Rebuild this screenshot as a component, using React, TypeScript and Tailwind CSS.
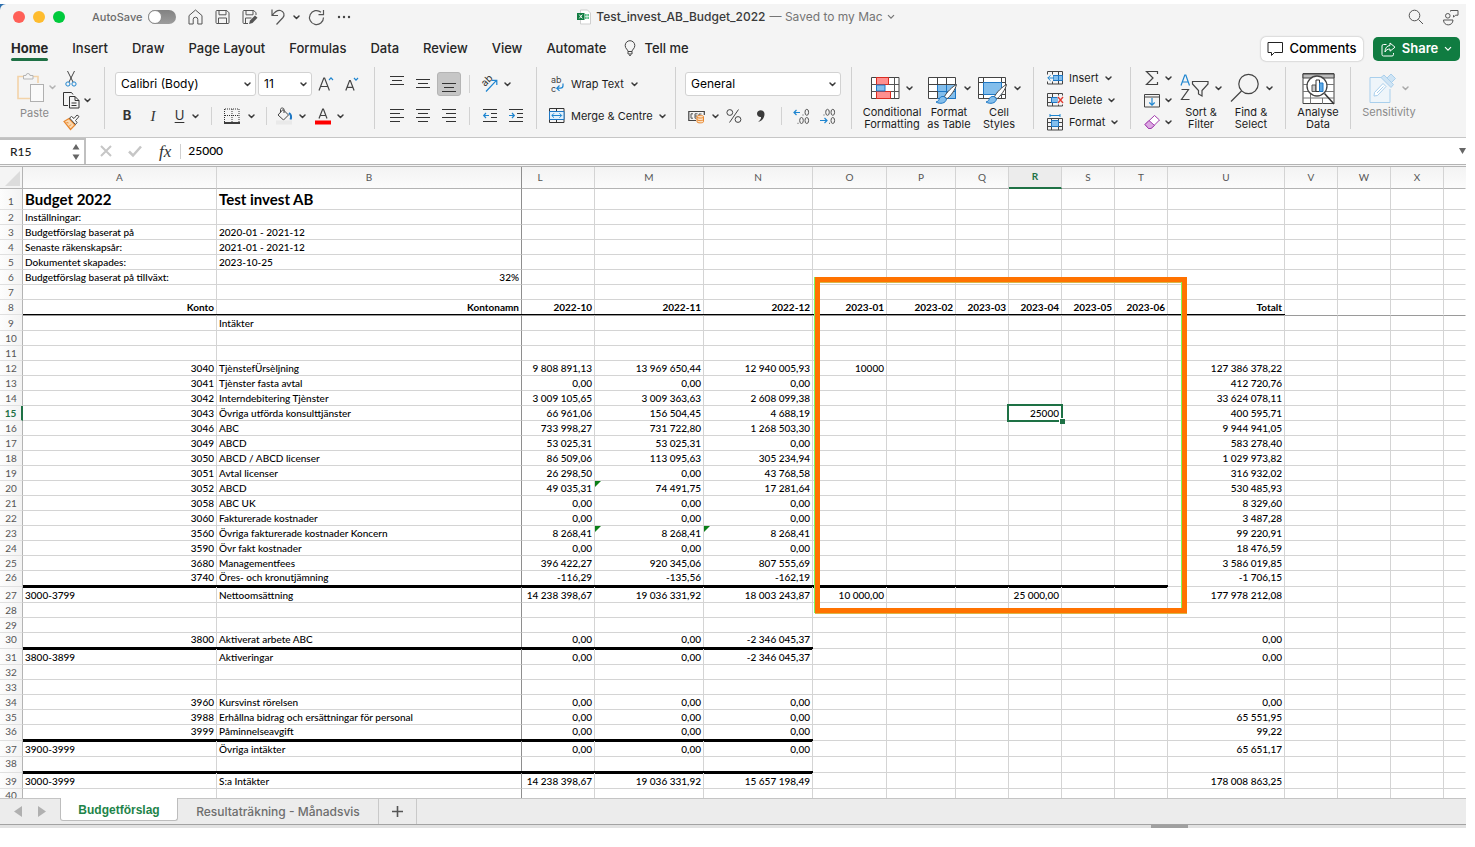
import type { ReactNode } from "react";

/* ---------- small building blocks ---------- */

type SvgProps = { w: number; h: number; children: ReactNode; className?: string };

function Svg({ w, h, children, className = "" }: SvgProps) {
  return (
    <svg
      width={w}
      height={h}
      viewBox={`0 0 ${w} ${h}`}
      fill="none"
      stroke="#3b3b3b"
      strokeWidth="1"
      className={`shrink-0 overflow-visible ${className}`}
      aria-hidden="true"
    >
      {children}
    </svg>
  );
}

function Chevron({ className = "" }: { className?: string }) {
  return (
    <Svg w={7} h={5} className={className}>
      <path d="M1 1l2.5 2.5L6 1" strokeWidth="1.5" strokeLinecap="round" strokeLinejoin="round" />
    </Svg>
  );
}

function IconButton({ label, children, className = "w-6" }: { label: string; children: ReactNode; className?: string }) {
  return (
    <button type="button" aria-label={label} className={`flex h-6 shrink-0 items-center justify-center rounded-[3px] ${className}`}>
      {children}
    </button>
  );
}

function Divider() {
  return <div className="h-[18px] w-px shrink-0 bg-[#d2d2d2]" />;
}

function Group({ width, children }: { width: string; children: ReactNode }) {
  return (
    <div className={`flex shrink-0 ${width}`}>
      <div className="min-w-0 grow">{children}</div>
      <div className="mt-0.5 h-[62px] w-px bg-[#d0d0d0]" />
    </div>
  );
}

function BigButton({ icon, lines, width, chevron = true, faded = false }: { icon: ReactNode; lines: string[]; width: string; chevron?: boolean; faded?: boolean }) {
  return (
    <button type="button" className={`flex shrink-0 flex-col items-center ${width} ${faded ? "text-[#8a8a8a]" : "text-[#1c1c1c]"}`}>
      <span className="flex h-[34px] items-center gap-[6px]">
        {icon}
        {chevron && <Chevron className={faded ? "opacity-40" : ""} />}
      </span>
      <span className="mt-px flex flex-col text-[11px] leading-3 whitespace-nowrap">
        {lines.map((l) => (
          <span key={l}>{l}</span>
        ))}
      </span>
    </button>
  );
}

/* ---------- title bar ---------- */

function TitleBar() {
  return (
    <div className="grid h-[26px] grid-cols-[1fr_auto_1fr] items-center">
      <div className="flex items-center pl-[13px]">
        <div className="flex gap-2">
          <button type="button" aria-label="Close" className="size-3 rounded-full bg-[#ff5f57]" />
          <button type="button" aria-label="Minimise" className="size-3 rounded-full bg-[#febc2e]" />
          <button type="button" aria-label="Zoom" className="size-3 rounded-full bg-[#00ca3c]" />
        </div>
        <label htmlFor="autosave" className="ml-[27px] w-[50px] text-[11px] font-medium whitespace-nowrap text-[#6b6b6b]">
          AutoSave
        </label>
        <span className="ml-1.5 flex h-[14px] w-7 items-center rounded-full bg-linear-to-b from-[#828282] to-[#9c9c9c]">
          <input
            id="autosave"
            type="checkbox"
            role="switch"
            className="size-[14px] appearance-none rounded-full border border-[#8a8a8a] bg-white"
          />
        </span>
        <div className="ml-3 flex items-center gap-3">
          <button type="button" aria-label="Home">
            <Svg w={15} h={16}>
              <path d="M1 6.6L7.5 1 14 6.6V15H9.8V10.5a2.3 2.3 0 00-4.6 0V15H1z" stroke="#555" strokeLinejoin="round" />
            </Svg>
          </button>
          <button type="button" aria-label="Save">
            <Svg w={15} h={16}>
              <path d="M1 2.5A1 1 0 012 1.5h9.8L14 3.8V13.5a1 1 0 01-1 1H2a1 1 0 01-1-1zM4 1.5v4.3h7V1.5M3.5 14.5V9h8v5.500" stroke="#555" />
            </Svg>
          </button>
          <button type="button" aria-label="Save as">
            <Svg w={16} h={16}>
              <path d="M6 14.500H2a1 1 0 01-1-1v-11A1 1 0 012 1.500h9.800L14 3.800V6M4 1.500v4.300h7V1.500M3.500 14.500V9h6" stroke="#555" />
              <path d="M7 15l1-3.500L13 6.500l2.500 2.300-5 5.200z" fill="#555" stroke="none" />
            </Svg>
          </button>
          <button type="button" aria-label="Undo" className="flex items-center gap-2">
            <Svg w={15} h={18}>
              <path d="M2 1.500v6h6M2.300 7.300C5 3.500 8 2 10.500 2.500c3.500.8 4.500 4.700 2.500 7L6.500 16.500" stroke="#555" strokeWidth="1.200" />
            </Svg>
            <Chevron />
          </button>
          <button type="button" aria-label="Redo" className="-ml-1">
            <Svg w={17} h={17}>
              <path d="M15.500 8.500A7 7 0 1113 3.200M15.500 1v4.700h-5" stroke="#555" strokeWidth="1.200" />
            </Svg>
          </button>
          <button type="button" aria-label="More">
            <Svg w={14} h={4}>
              <g fill="#444" stroke="none">
                <circle cx="2" cy="2" r="1.200" />
                <circle cx="7" cy="2" r="1.200" />
                <circle cx="12" cy="2" r="1.200" />
              </g>
            </Svg>
          </button>
        </div>
      </div>

      <h1 className="flex items-center pl-1.5 text-[12px] whitespace-nowrap text-[#3a3a3a]">
        <Svg w={15} h={16} className="mr-1">
          <path d="M3.500 1h7L13.500 4v11h-10z" fill="#fff" stroke="#cfcfcf" />
          <path d="M8 5h4v5H8z" fill="#5fbf8a" stroke="none" />
          <path d="M8 7.500h4M10 5v5" stroke="#fff" strokeWidth=".6" />
          <rect x="0" y="4" width="7.500" height="7" fill="#107c41" stroke="none" />
          <path d="M2.300 5.600l3 3.800M5.300 5.600l-3 3.800" stroke="#fff" />
        </Svg>
        <span className="font-medium">Test_invest_AB_Budget_2022</span>
        <span className="ml-1 text-[#757575]">— Saved to my Mac</span>
        <Svg w={8} h={6} className="ml-1">
          <path d="M1 1.200l3 3 3-3" stroke="#757575" strokeWidth="1.200" />
        </Svg>
      </h1>

      <div className="flex items-center justify-end gap-[18px] pr-[7px]">
        <button type="button" aria-label="Search">
          <Svg w={16} h={16}>
            <circle cx="6.500" cy="6.500" r="5.300" stroke="#555" />
            <path d="M10.500 10.500L15 15" stroke="#555" />
          </Svg>
        </button>
        <button type="button" aria-label="Account">
          <Svg w={17} h={17}>
            <circle cx="5.800" cy="6.800" r="2.300" stroke="#555" />
            <path d="M1.500 11h9.500c0 6.500-9.500 6.500-9.500 0z" stroke="#555" />
            <path d="M8.500 2.500v-1h7.500v4.700h-2.500l-2 2V6.200" stroke="#555" />
          </Svg>
        </button>
      </div>
    </div>
  );
}

/* ---------- ribbon tabs ---------- */

const TABS = ["Insert", "Draw", "Page Layout", "Formulas", "Data", "Review", "View", "Automate"];

function RibbonTabs() {
  return (
    <div className="flex h-[35px] items-start pl-[11px] text-[13px] text-[#262626]">
      <nav className="mt-2 flex gap-6 font-medium" aria-label="Ribbon">
        <a href="#home" className="flex h-[23px] flex-col justify-between leading-5 font-bold">
          Home
          <span className="h-[3px] rounded-full bg-[#1e7145]" />
        </a>
        {TABS.map((t) => (
          <a key={t} href={`#${t.toLowerCase().replace(" ", "-")}`} className="leading-5 whitespace-nowrap">
            {t}
          </a>
        ))}
      </nav>
      <button type="button" className="mt-2 ml-[18px] flex items-center gap-2 leading-5 font-medium">
        <Svg w={12} h={16}>
          <path d="M4 11.500c0-2-2.800-2.700-2.800-6a4.800 4.800 0 019.600 0c0 3.300-2.800 4-2.800 6zM4 11.500v2.500h4v-2.500M5 15.300h2" stroke="#444" />
        </Svg>
        Tell me
      </button>
      <div className="mt-[7px] mr-1.5 ml-auto flex gap-2.5 font-medium">
        <button type="button" className="flex h-6 w-[102px] items-center justify-center gap-1.5 rounded-[5px] bg-white text-black shadow-[0_0_2px_rgba(0,0,0,0.35)]">
          <Svg w={16} h={16}>
            <path d="M1 1.500h14.500v10H7.500l-3 3v-3H1z" stroke="#222" strokeLinejoin="round" />
          </Svg>
          Comments
        </button>
        <button type="button" className="flex h-6 w-[87px] items-center justify-center gap-1.5 rounded-[5px] bg-[#107c41] font-semibold text-white">
          <Svg w={15} h={15}>
            <path d="M5.500 2.500H2.500a1.500 1.500 0 00-1.500 1.500v8.500A1.500 1.500 0 002.500 14h8.500a1.500 1.500 0 001.500-1.500V11" stroke="#fff" />
            <path d="M9 1l5 4.200-5 4V7C6.500 7 5 8 4 10c0-4 2-6.300 5-6.500z" stroke="#fff" strokeLinejoin="round" />
          </Svg>
          Share
          <Svg w={8} h={6}>
            <path d="M1 1.200l3 3 3-3" stroke="#fff" strokeWidth="1.200" />
          </Svg>
        </button>
      </div>
    </div>
  );
}

/* ---------- ribbon ---------- */

function Dropdown({ label, value, width }: { label: string; value: string; width: string }) {
  return (
    <span className={`flex h-6 shrink-0 items-center rounded-[3px] border border-[#d2d2d2] bg-white pr-1 ${width}`}>
      <select aria-label={label} className="min-w-0 grow appearance-none bg-transparent pl-[5px] text-[12px] text-black outline-none">
        <option>{value}</option>
      </select>
      <Chevron />
    </span>
  );
}

function Lines({ rows }: { rows: [number, number, number][] }) {
  return (
    <Svg w={14} h={16}>
      {rows.map(([x, w, y]) => (
        <path key={y} d={`M${x} ${y + 0.5}h${w}`} stroke="#333" />
      ))}
    </Svg>
  );
}

function Grid({ children }: { children?: ReactNode }) {
  return (
    <Svg w={16} h={16}>
      <path d="M.5 1.500h15v12.500H.5zM.5 5.500h15M.5 10.500h15M5.500 1.500v12.500M11.500 1.500v12.500" stroke="#444" />
      {children}
    </Svg>
  );
}

const BRUSH = (
  <>
    <path d="M28.500 8.500c-4 2-10 8-12 12l2.500 2.200c3-2 8.500-9 9.500-14.200z" fill="#fff" stroke="#444" />
    <path d="M16 20.500c-3-.5-4.500 1-5 3-.3 1.500-1.500 2-3 2.500 4 2.500 10 1.500 10.500-3.200z" fill="#83beec" stroke="#1e77c4" />
  </>
);

function Ribbon() {
  return (
    <div className="flex h-[72px] overflow-hidden border-b border-transparent">
      <Group width="w-[105px]">
        <div className="flex">
          <div className="flex flex-col pt-[7px] pl-[17px] text-[11px] text-[#8a8a8a]">
            <button type="button" className="flex flex-col items-start">
              <span className="flex items-center gap-1">
                <Svg w={28} h={31}>
                  <path d="M7 4.500H1v22h12M16 4.500h5V11" stroke="#f3d3a8" strokeWidth="1.600" />
                  <path d="M6.500 7V3.500H9a2 2 0 014 0h3V7z" stroke="#b5b5b5" fill="#f5f5f5" />
                  <rect x="13.500" y="12.500" width="13" height="17" fill="#fafafa" stroke="#b0b0b0" />
                </Svg>
                <Chevron className="opacity-35" />
              </span>
              <span className="ml-[3px] leading-5">Paste</span>
            </button>
          </div>
          <div className="ml-[7px] flex flex-col items-start gap-[5px] pt-[6px]">
            <button type="button" aria-label="Cut" className="ml-0.5">
              <Svg w={12} h={16}>
                <path d="M2.500 0l5.500 11M9.500 0L4 11" stroke="#444" />
                <circle cx="2.900" cy="13" r="2.100" stroke="#1e85d0" />
                <circle cx="9" cy="13" r="2.100" stroke="#1e85d0" />
              </Svg>
            </button>
            <button type="button" aria-label="Copy" className="flex items-center gap-1">
              <Svg w={17} h={17}>
                <path d="M5 13.500H.5V.5h8l1.500 2" stroke="#333" />
                <path d="M6.500 4.500h5.500l4 4v7.500h-9.500zM12 4.500v4h4M8.500 11h5M8.500 13.500h5" stroke="#333" />
              </Svg>
              <Chevron />
            </button>
            <button type="button" aria-label="Format painter">
              <Svg w={17} h={16}>
                <path d="M1 7.500L6 4.500l6 6.500-4.500 4.500z" fill="#fbd9b0" stroke="#e8872e" strokeWidth="1.200" />
                <path d="M3.500 8.500l2 .5M6 12.500l2-2" stroke="#e8872e" />
                <path d="M6.500 4l2-1.500L11 4.500 14 1l2 1.500-3.500 4 1.500 2-1.500 2z" fill="#fff" stroke="#444" />
              </Svg>
            </button>
          </div>
        </div>
      </Group>

      <Group width="w-[270px]">
        <div className="flex flex-col gap-2 pt-[7px] pl-2.5">
          <div className="flex items-center gap-0.5">
            <Dropdown label="Font" value="Calibri (Body)" width="w-[141px]" />
            <Dropdown label="Font size" value="11" width="w-[54px]" />
            <IconButton label="Increase font size">
              <Svg w={16} h={16}>
                <path d="M1 14.500L5.800 2h.8l4.800 12.500M2.700 10.500h7" stroke="#444" strokeWidth="1.200" />
                <path d="M11 4l2-2.200L15 4" stroke="#1e85d0" strokeWidth="1.200" />
              </Svg>
            </IconButton>
            <IconButton label="Decrease font size">
              <Svg w={14} h={16}>
                <path d="M.8 14.500L4.600 4.500h.7l3.800 10M2.200 11.300h5.500" stroke="#444" strokeWidth="1.200" />
                <path d="M9 2l2 2.200L13 2" stroke="#1e85d0" strokeWidth="1.200" />
              </Svg>
            </IconButton>
          </div>
          <div className="flex items-center text-[13px] text-[#333]">
            <IconButton label="Bold">
              <span className="font-bold">B</span>
            </IconButton>
            <IconButton label="Italic" className="w-7">
              <span className="font-['Liberation_Serif',serif] text-[15px] italic">I</span>
            </IconButton>
            <IconButton label="Underline" className="w-10 gap-2">
              <span className="underline underline-offset-2">U</span>
              <Chevron />
            </IconButton>
            <span className="ml-1 flex">
              <Divider />
            </span>
            <IconButton label="Borders" className="ml-2 w-[38px] gap-2">
              <Svg w={16} h={16}>
                <path d="M.5 1v13M15 1v13M1 1h14M8 1v13M1 7.500h14" stroke="#333" strokeDasharray="1 1" />
                <path d="M0 15h16" stroke="#111" strokeWidth="1.600" />
              </Svg>
              <Chevron />
            </IconButton>
            <span className="ml-2 flex">
              <Divider />
            </span>
            <IconButton label="Fill colour" className="ml-1 w-10 gap-1.5">
              <Svg w={17} h={18}>
                <path d="M7 2.500l5.500 5.500-5 5L2 8zM4.500 5.500V2.500C4.500.5 8 .5 8 2.500V6" stroke="#444" />
                <path d="M13 6c2 1.500 2.500 4 1.500 6.500" stroke="#1e77c4" strokeWidth="2" />
                <path d="M0 15.500h16" stroke="#e9e9e9" strokeWidth="4" />
              </Svg>
              <Chevron />
            </IconButton>
            <IconButton label="Font colour" className="w-9 gap-1.5">
              <Svg w={16} h={18}>
                <path d="M4 11.500L7.700 2h.7L12 11.500M5.200 8.500h5.600" stroke="#444" strokeWidth="1.200" />
                <path d="M0 15.500h16" stroke="#fe0000" strokeWidth="4" />
              </Svg>
              <Chevron />
            </IconButton>
          </div>
        </div>
      </Group>

      <Group width="w-[162px]">
        <div className="flex flex-col gap-2 pt-[7px] pl-2.5">
          <div className="flex items-center gap-0.5">
            <IconButton label="Top align">
              <Lines rows={[[0, 14, 0], [2, 10, 4], [0, 14, 8]]} />
            </IconButton>
            <IconButton label="Middle align">
              <Lines rows={[[0, 14, 3], [2, 10, 7], [0, 14, 11]]} />
            </IconButton>
            <button type="button" aria-label="Bottom align" aria-pressed="true" className="flex size-6 items-center justify-center rounded-[3px] border border-[#b4b4b4] bg-[#c6c6c6]">
              <Lines rows={[[0, 14, 7], [2, 10, 11], [0, 14, 15]]} />
            </button>
            <span className="mx-1.5 flex">
              <Divider />
            </span>
            <IconButton label="Orientation" className="w-[34px] gap-1.5">
              <Svg w={18} h={18}>
                <g stroke="none" fill="#333" fontFamily="Inter" fontSize="10">
                  <text x="5" y="12" transform="rotate(-45 5 12)">
                    ab
                  </text>
                </g>
                <path d="M6 16.500L16 5.800M12 5.300h4.800V10" stroke="#1e85d0" strokeWidth="1.200" />
              </Svg>
              <Chevron />
            </IconButton>
          </div>
          <div className="flex items-center gap-0.5">
            <IconButton label="Align left">
              <Lines rows={[[0, 14, 1], [0, 10, 5], [0, 14, 9], [0, 10, 13]]} />
            </IconButton>
            <IconButton label="Centre">
              <Lines rows={[[0, 14, 1], [2, 10, 5], [0, 14, 9], [2, 10, 13]]} />
            </IconButton>
            <IconButton label="Align right">
              <Lines rows={[[0, 14, 1], [4, 10, 5], [0, 14, 9], [4, 10, 13]]} />
            </IconButton>
            <span className="mx-1.5 flex">
              <Divider />
            </span>
            <IconButton label="Decrease indent">
              <Svg w={15} h={16}>
                <path d="M0 1.500h14M8 5.500h6M8 9.500h6M0 13.500h14" stroke="#333" />
                <path d="M6 7.500H.8M3 5L.7 7.500 3 10" stroke="#1e85d0" strokeWidth="1.200" />
              </Svg>
            </IconButton>
            <IconButton label="Increase indent">
              <Svg w={15} h={16}>
                <path d="M0 1.500h14M8 5.500h6M8 9.500h6M0 13.500h14" stroke="#333" />
                <path d="M0 7.500h5.200M3 5l2.300 2.500L3 10" stroke="#1e85d0" strokeWidth="1.200" />
              </Svg>
            </IconButton>
          </div>
        </div>
      </Group>

      <Group width="w-[139px]">
        <div className="flex flex-col gap-2 pt-[7px] pl-3 text-[11px] whitespace-nowrap text-[#1c1c1c]">
          <button type="button" className="flex h-6 items-center gap-[7px]">
            <Svg w={15} h={16}>
              <g stroke="none" fill="#444" fontFamily="Inter" fontSize="9">
                <text x="2" y="7">
                  ab
                </text>
                <text x="2" y="16">
                  c
                </text>
              </g>
              <path d="M14 7.500v2c0 1.700-1 2.700-2.500 2.700H8M10.500 9.500L7.800 12.200l2.700 2.700" stroke="#1e85d0" strokeWidth="1.200" />
            </Svg>
            Wrap Text
            <Chevron />
          </button>
          <button type="button" className="flex h-6 items-center gap-[6px]">
            <Svg w={16} h={16}>
              <path d="M.5.500h14.500v14H.5zM.5 3.500h14.500M.5 11.500h14.500M7.500.500v3M7.500 11.500v3" stroke="#333" />
              <path d="M.5 3.500h14.500v8H.5z" fill="#e3f1fb" stroke="#1e77c4" />
              <path d="M3 7.500h9.500M5 5.300L2.800 7.500 5 9.700M10.500 5.300l2.200 2.200-2.200 2.200" stroke="#1e85d0" />
            </Svg>
            Merge &amp; Centre
            <Chevron />
          </button>
        </div>
      </Group>

      <Group width="w-[176px]">
        <div className="flex flex-col gap-2 pt-[7px] pl-[9px]">
          <Dropdown label="Number format" value="General" width="w-[156px]" />
          <div className="flex items-center">
            <IconButton label="Currency" className="ml-[3px] w-[30px] gap-1.5">
              <Svg w={18} h={15}>
                <path d="M8 11.500H.8v-9h15.500V6" stroke="#444" strokeWidth="1.200" />
                <path d="M5 4.800H3v4.400h2M9.500 4.800H7v4.400h1.500M7 7h2M13.500 5h-2.500v2" stroke="#555" />
                <path d="M9 7.500c0-1.500 6.500-1.500 6.500 0v5.200c0 1.600-6.500 1.600-6.500 0z" fill="#fce0c2" stroke="#e8872e" />
                <path d="M9 8c0 1.400 6.500 1.400 6.500 0M9 10.500c0 1.400 6.500 1.400 6.500 0" stroke="#e8872e" />
              </Svg>
              <Chevron />
            </IconButton>
            <IconButton label="Percent" className="ml-1 w-6">
              <Svg w={16} h={16}>
                <circle cx="3.800" cy="4.500" r="2.900" stroke="#444" />
                <circle cx="12" cy="11.500" r="2.900" stroke="#444" />
                <path d="M12.500 1.500L3.500 14.500" stroke="#444" />
              </Svg>
            </IconButton>
            <IconButton label="Comma" className="ml-[3px] w-6">
              <Svg w={10} h={14}>
                <path d="M8.500 5c0 4-2.500 6.800-6.500 8C4.500 11 5.300 9.300 5 8c-2 .5-4-1-4-3.200C1 2.700 2.700 1.300 4.800 1.300S8.500 3 8.500 5z" fill="#3b3b3b" stroke="none" />
              </Svg>
            </IconButton>
            <span className="mx-2 flex">
              <Divider />
            </span>
            <IconButton label="Increase decimals">
              <Svg w={18} h={17}>
                <path d="M7 4.500H1M3.500 2L1 4.500 3.500 7" stroke="#1e85d0" strokeWidth="1.200" />
                <ellipse cx="13.800" cy="4.300" rx="1.800" ry="3" stroke="#555" />
                <ellipse cx="8.500" cy="12.500" rx="1.800" ry="3" stroke="#555" />
                <ellipse cx="13.800" cy="12.500" rx="1.800" ry="3" stroke="#555" />
                <path d="M9.500 7h1M4.500 15.300h1" stroke="#555" />
              </Svg>
            </IconButton>
            <IconButton label="Decrease decimals" className="ml-0.5 w-6">
              <Svg w={18} h={17}>
                <path d="M1 12.500h7M5.500 10L8 12.500 5.500 15" stroke="#1e85d0" strokeWidth="1.200" />
                <ellipse cx="8.500" cy="4.300" rx="1.800" ry="3" stroke="#555" />
                <ellipse cx="13.800" cy="4.300" rx="1.800" ry="3" stroke="#555" />
                <ellipse cx="13.800" cy="12.500" rx="1.800" ry="3" stroke="#555" />
                <path d="M4.500 7h1M10 15.300h1" stroke="#555" />
              </Svg>
            </IconButton>
          </div>
        </div>
      </Group>

      <Group width="w-[182px]">
        <div className="flex pt-[6px] pl-2.5">
          <BigButton
            width="w-[60px]"
            lines={["Conditional", "Formatting"]}
            icon={
              <Svg w={29} h={24}>
                <path d="M.5 1.500h27.500v21H.5z" fill="#fff" stroke="#444" />
                <path d="M.5 8.500h27.500M.5 15.500h27.500M5.500 1.500v21M23.500 1.500v21" stroke="#555" />
                <path d="M5.500 1.500h12v7h-12zM5.500 15.500h14v7h-14z" fill="#ff8f8f" stroke="#d92c20" />
                <path d="M5.500 9h8.500v6H5.500z" fill="#83beec" stroke="#1e77c4" />
              </Svg>
            }
          />
          <BigButton
            width="w-[54px]"
            lines={["Format", "as Table"]}
            icon={
              <Svg w={30} h={28} className="mt-1">
                <path d="M.5 1.500h27v21H.5z" fill="#fff" stroke="#444" />
                <path d="M9.500 8.500h18v14h-18z" fill="#83beec" stroke="#1e77c4" />
                <path d="M9.500 15.500h18M18.500 8.500v14" stroke="#1e77c4" />
                <path d="M.5 8.500h27M.5 15.500h9M9.500 1.500v7M18.500 1.500v7M9.500 15v7" stroke="#444" />
                {BRUSH}
              </Svg>
            }
          />
          <BigButton
            width="w-[46px]"
            lines={["Cell", "Styles"]}
            icon={
              <Svg w={30} h={28} className="mt-1">
                <path d="M.5 1.500h27v21H.5z" fill="#fff" stroke="#444" />
                <path d="M.5 6.500h27M5.500 1.500v21M23.500 1.500v21M.5 18.500h27" stroke="#444" />
                <path d="M5.500 6.500h18v12h-18z" fill="#83beec" stroke="#1e77c4" />
                {BRUSH}
              </Svg>
            }
          />
        </div>
      </Group>

      <Group width="w-[97px]">
        <div className="flex flex-col pt-0.5 pl-[13px] text-[11px] text-[#1c1c1c]">
          <button type="button" className="flex h-[22px] items-center gap-[6px]">
            <Grid>
              <path d="M6 5.500h9.500v5H6z" fill="#83beec" stroke="#1e77c4" />
              <path d="M11.500 5.500v5" stroke="#1e77c4" />
              <path d="M0 4.500h6v7H0z" fill="#f4f4f4" stroke="none" />
              <path d="M7 8H.8M3.500 5.300L.8 8l2.700 2.700" stroke="#1e85d0" />
            </Grid>
            Insert
            <Chevron />
          </button>
          <button type="button" className="flex h-[22px] items-center gap-[6px]">
            <Grid>
              <path d="M4.500 5.500h6v5h-6z" fill="#83beec" stroke="#1e77c4" />
              <path d="M10.500 3.500H17v9h-6.500z" fill="#f4f4f4" stroke="none" />
              <path d="M11 5l5 6M16 5L11 11" stroke="#e03a30" strokeWidth="1.300" />
            </Grid>
            Delete
            <Chevron />
          </button>
          <button type="button" className="flex h-[22px] items-center gap-[6px]">
            <Svg w={16} h={17}>
              <path d="M.5 4.500h15v11.500H.5zM.5 8.500h15M.5 12.500h15M4.500 4.500v11.500M11.500 4.500v11.500" stroke="#444" />
              <path d="M4.500 6.500h7v6h-7z" fill="#83beec" stroke="#1e77c4" />
              <path d="M3 1.500h10M3 0v3M13 0v3" stroke="#1e85d0" />
            </Svg>
            Format
            <Chevron />
          </button>
        </div>
      </Group>

      <Group width="w-[155px]">
        <div className="flex pl-[13px]">
          <div className="flex flex-col pt-0.5">
            <button type="button" aria-label="AutoSum" className="flex h-[22px] items-center gap-[5px]">
              <Svg w={16} h={16}>
                <path d="M13.500 4V1.500H2.500L9 8l-6.500 6.500h11V12" stroke="#444" strokeWidth="1.200" />
              </Svg>
              <Chevron />
            </button>
            <button type="button" aria-label="Fill" className="flex h-[22px] items-center gap-[5px]">
              <Svg w={16} h={15}>
                <path d="M.5 1.500h15v12.500H.5zM.5 4h15" stroke="#444" />
                <path d="M8 5v7M5.300 9.500L8 12.200l2.700-2.700" stroke="#1e85d0" strokeWidth="1.200" />
              </Svg>
              <Chevron />
            </button>
            <button type="button" aria-label="Clear" className="flex h-[22px] items-center gap-[5px]">
              <Svg w={16} h={16}>
                <path d="M10.500 1.500l5 4.500-8.500 8.500H4.500L1 10.500z" fill="#fff" stroke="#a03aac" />
                <path d="M5 6.500l5.500 5-3.500 3H4.500L1 10.500z" fill="#dca8e2" stroke="#a03aac" />
              </Svg>
              <Chevron />
            </button>
          </div>
          <div className="flex pt-[6px] pl-1">
            <BigButton
              width="w-[50px]"
              lines={["Sort &", "Filter"]}
              icon={
                <Svg w={29} h={30}>
                  <path d="M1 12.500L4.800 2h1L9.500 12.500M2.300 9h6" stroke="#1e85d0" strokeWidth="1.200" />
                  <path d="M1.500 16.500h7L1.500 26.500h8" stroke="#444" strokeWidth="1.200" />
                  <path d="M12.500 8.500H28v2.500l-6 6.500v5.500l-3.500-2v-3.500l-6-6.500z" stroke="#444" strokeWidth="1.200" />
                </Svg>
              }
            />
            <BigButton
              width="w-[50px]"
              lines={["Find &", "Select"]}
              icon={
                <Svg w={30} h={30}>
                  <circle cx="18.500" cy="11" r="9.700" stroke="#444" strokeWidth="1.200" />
                  <path d="M11.500 18L1 28.500" stroke="#444" strokeWidth="1.200" />
                </Svg>
              }
            />
          </div>
        </div>
      </Group>

      <Group width="w-[65px]">
        <div className="flex justify-center pt-[6px]">
          <BigButton
            width="w-[50px]"
            lines={["Analyse", "Data"]}
            chevron={false}
            icon={
              <Svg w={33} h={33}>
                <path d="M1 1.500h31v30H1z" fill="#fff" stroke="#444" />
                <path d="M1 2h31v4H1z" fill="#bdbdbd" stroke="#444" />
                <path d="M1 12.500h31M1 19.500h31M1 26h31M8.500 19.500v12M20.500 26v6" stroke="#777" />
                <circle cx="15" cy="14" r="10" fill="#fff" stroke="#444" strokeWidth="1.300" />
                <path d="M10 13h4v6.500h-4z" fill="#ccc" stroke="#555" />
                <path d="M14 8h3.500v11.500H14z" fill="#fff" stroke="#333" />
                <path d="M17.500 11H21v8.500h-3.500z" fill="#5ea9e6" stroke="#1e77c4" />
                <path d="M22.500 21.500L32 32" stroke="#333" strokeWidth="1.500" />
              </Svg>
            }
          />
        </div>
      </Group>

      <div className="flex pt-[6px] pl-2">
        <BigButton
          width="w-[60px]"
          lines={["Sensitivity"]}
          faded
          icon={
            <Svg w={27} h={31}>
              <path d="M13 4.500H1v25h20V16" stroke="#a9cfec" fill="#eef5fa" />
              <path d="M5.500 19.500l8.500-9 3 3-8.500 9-3.500.5zM8 20l6.500-6.500" stroke="#a9cfec" fill="#fff" />
              <path d="M12 4.500l3-2.500 9.500 9.500-2.500 3zM18 5l4-4 4.500 4.500-4 4" stroke="#a9cfec" fill="#cfe4f4" />
            </Svg>
          }
        />
      </div>
    </div>
  );
}

/* ---------- formula bar ---------- */

function FormulaBar() {
  return (
    <div className="flex h-[27px] items-stretch border-t border-[#c6c6c6] bg-white">
      <div className="flex w-[86px] items-center border-2 border-b-0 border-l-0 border-[#c0c0c0] pr-1 pl-2.5">
        <input aria-label="Name box" defaultValue="R15" className="min-w-0 grow bg-transparent font-['Lato',sans-serif] text-[12px] font-medium text-[#222] outline-none" />
        <button type="button" aria-label="Name list">
          <Svg w={8} h={18}>
            <path d="M4 1l3.500 5.500h-7zM4 17l3.500-5.500h-7z" fill="#666" stroke="none" />
          </Svg>
        </button>
      </div>
      <button type="button" aria-label="Cancel" className="ml-3.5 flex items-center">
        <Svg w={12} h={12}>
          <path d="M1 1l10 10M11 1L1 11" stroke="#c6c6c6" strokeWidth="2" />
        </Svg>
      </button>
      <button type="button" aria-label="Enter" className="ml-4 flex items-center">
        <Svg w={14} h={12}>
          <path d="M1 6.500l4 4L13 1.500" stroke="#c6c6c6" strokeWidth="2.500" />
        </Svg>
      </button>
      <label htmlFor="formula" className="ml-[17px] self-center font-['Liberation_Serif',serif] text-[17px] leading-none text-[#333] italic">
        fx
      </label>
      <div className="mt-1.5 ml-[9px] h-[15px] w-px bg-[#d0d0d0]" />
      <input
        id="formula"
        defaultValue="25000"
        className="min-w-0 grow bg-transparent pl-[7px] font-['Lato',sans-serif] text-[12px] font-medium text-black outline-none"
      />
      <button type="button" aria-label="Expand formula bar" className="flex items-center">
        <Svg w={7} h={6}>
          <path d="M0 0h7L3.500 6z" fill="#666" stroke="none" />
        </Svg>
      </button>
    </div>
  );
}

/* ---------- worksheet ---------- */

const COLUMNS = ["A", "B", "L", "M", "N", "O", "P", "Q", "R", "S", "T", "U", "V", "W", "X", ""];
const WIDTHS = [
  "w-[23px]", "w-[194px]", "w-[305px]", "w-[73px]", "w-[109px]", "w-[109px]", "w-[74px]", "w-[69px]", "w-[53px]",
  "w-[53px]", "w-[53px]", "w-[53px]", "w-[117px]", "w-[53px]", "w-[53px]", "w-[53px]", "w-auto",
];

type Row = Record<string, string>;

const account = (A: string, B: string, L: string, M: string, N: string, U: string): Row => ({ A, B, L, M, N, U });

const ROWS: Record<number, Row> = {
  1: { A: "Budget 2022", B: "Test invest AB" },
  2: { A: "Inställningar:" },
  3: { A: "Budgetförslag baserat på", B: "2020-01 - 2021-12" },
  4: { A: "Senaste räkenskapsår:", B: "2021-01 - 2021-12" },
  5: { A: "Dokumentet skapades:", B: "2023-10-25" },
  6: { A: "Budgetförslag baserat på tillväxt:", B: "32%" },
  8: {
    A: "Konto", B: "Kontonamn", L: "2022-10", M: "2022-11", N: "2022-12", O: "2023-01", P: "2023-02",
    Q: "2023-03", R: "2023-04", S: "2023-05", T: "2023-06", U: "Totalt",
  },
  9: { B: "Intäkter" },
  12: { ...account("3040", "TjènstefÜrsèljning", "9 808 891,13", "13 969 650,44", "12 940 005,93", "127 386 378,22"), O: "10000" },
  13: account("3041", "Tjènster fasta avtal", "0,00", "0,00", "0,00", "412 720,76"),
  14: account("3042", "Interndebitering Tjènster", "3 009 105,65", "3 009 363,63", "2 608 099,38", "33 624 078,11"),
  15: { ...account("3043", "Övriga utförda konsulttjänster", "66 961,06", "156 504,45", "4 688,19", "400 595,71"), R: "25000" },
  16: account("3046", "ABC", "733 998,27", "731 722,80", "1 268 503,30", "9 944 941,05"),
  17: account("3049", "ABCD", "53 025,31", "53 025,31", "0,00", "583 278,40"),
  18: account("3050", "ABCD / ABCD licenser", "86 509,06", "113 095,63", "305 234,94", "1 029 973,82"),
  19: account("3051", "Avtal licenser", "26 298,50", "0,00", "43 768,58", "316 932,02"),
  20: account("3052", "ABCD", "49 035,31", "74 491,75", "17 281,64", "530 485,93"),
  21: account("3058", "ABC UK", "0,00", "0,00", "0,00", "8 329,60"),
  22: account("3060", "Fakturerade kostnader", "0,00", "0,00", "0,00", "3 487,28"),
  23: account("3560", "Övriga fakturerade kostnader Koncern", "8 268,41", "8 268,41", "8 268,41", "99 220,91"),
  24: account("3590", "Övr fakt kostnader", "0,00", "0,00", "0,00", "18 476,59"),
  25: account("3680", "Managementfees", "396 422,27", "920 345,06", "807 555,69", "3 586 019,85"),
  26: account("3740", "Öres- och kronutjämning", "-116,29", "-135,56", "-162,19", "-1 706,15"),
  27: { ...account("3000-3799", "Nettoomsättning", "14 238 398,67", "19 036 331,92", "18 003 243,87", "177 978 212,08"), O: "10 000,00", R: "25 000,00" },
  30: account("3800", "Aktiverat arbete ABC", "0,00", "0,00", "-2 346 045,37", "0,00"),
  31: account("3800-3899", "Aktiveringar", "0,00", "0,00", "-2 346 045,37", "0,00"),
  34: account("3960", "Kursvinst rörelsen", "0,00", "0,00", "0,00", "0,00"),
  35: account("3988", "Erhållna bidrag och ersättningar för personal", "0,00", "0,00", "0,00", "65 551,95"),
  36: account("3999", "Påminnelseavgift", "0,00", "0,00", "0,00", "99,22"),
  37: account("3900-3999", "Övriga intäkter", "0,00", "0,00", "0,00", "65 651,17"),
  39: account("3000-3999", "S:a Intäkter", "14 238 398,67", "19 036 331,92", "15 657 198,49", "178 008 863,25"),
};

/* Row number -> last column covered by the heavy rule under that row. */
const HEAVY_RULES: Record<number, string> = { 26: "T", 30: "N", 36: "N", 38: "N" };
const TALL_ROWS = [9, 26, 27, 30, 31, 36, 37, 38, 39];
const FLAGGED = ["M20", "M23", "N23"];

function isUnderRule(row: number, col: number) {
  const last = HEAVY_RULES[row];
  return last !== undefined && col <= COLUMNS.indexOf(last);
}

function rowHeight(n: number) {
  if (n === 1) return "h-[21px]";
  if (n === 40) return "h-[9px]";
  return TALL_ROWS.includes(n) ? "h-4" : "h-[15px]";
}

function alignment(n: number, col: string, value: string) {
  if (n === 8) return "text-right";
  if (col === "A") return /^\d{4}$/.test(value) ? "text-right" : "text-left";
  if (col === "B") return value === "32%" ? "text-right" : "text-left";
  return "text-right";
}

function Cell({ n, col, index }: { n: number; col: string; index: number }) {
  const value = ROWS[n]?.[col] ?? "";
  const selected = n === 15 && col === "R";

  const rule = isUnderRule(n, index)
    ? "after:absolute after:left-0 after:-right-px after:-bottom-0.5 after:h-[3px] after:bg-black"
    : n === 8 && index <= COLUMNS.indexOf("U")
      ? "after:absolute after:left-0 after:-right-px after:-bottom-px after:h-px after:bg-black"
      : "";
  const bottom = n === 8 ? "border-b border-b-transparent" : n === 40 ? "" : "border-b border-b-[#d4d4d4]";
  const top = n === 9 ? "border-t border-t-[#9a9a9a]" : "";
  const right = col === "B" ? "border-r-[#8e8e8e]" : col === "" ? "border-r-transparent" : "border-r-[#d4d4d4]";
  const font = n === 1 ? "text-[15px] leading-[18px] font-bold" : n === 8 ? "font-bold" : "font-medium";
  const place = TALL_ROWS.includes(n) && n !== 9 && HEAVY_RULES[n] ? "align-top" : "align-middle";

  return (
    <td className={`relative border-r px-0.5 whitespace-nowrap ${place} ${right} ${bottom} ${top} ${rule} ${font} ${alignment(n, col, value)}`}>
      {value}
      {FLAGGED.includes(`${col}${n}`) && (
        <svg width="6" height="6" viewBox="0 0 6 6" className="absolute top-0 left-0" aria-hidden="true">
          <path d="M0 0h6L0 6z" fill="#0a8017" />
        </svg>
      )}
      {selected && (
        <span className="pointer-events-none absolute -inset-0.5 z-10 border-2 border-[#1e7145]">
          <span className="absolute -right-1 -bottom-1 size-[6px] border-t border-l border-white bg-[#1e7145]" />
        </span>
      )}
    </td>
  );
}

function Sheet() {
  const numbers = Array.from({ length: 40 }, (_, i) => i + 1);
  return (
    <div className="relative overflow-hidden border-t border-[#b4b4b4] bg-white font-['Lato',sans-serif]">
      <table className="w-full table-fixed border-separate border-spacing-0 text-[10px] leading-[12px] text-black">
        <colgroup>
          {WIDTHS.map((w, i) => (
            <col key={i} className={w} />
          ))}
        </colgroup>
        <thead>
          <tr className="h-[22px] bg-linear-to-b from-[#f3f3f3] to-[#fcfcfc] text-[#555]">
            <th className="relative border-r border-b border-[#b4b4b4] bg-[#f4f4f4]">
              <svg width="15" height="15" viewBox="0 0 15 15" className="absolute right-0.5 bottom-0.5" aria-hidden="true">
                <path d="M15 0v15H0z" fill="#dcdcdc" />
              </svg>
            </th>
            {COLUMNS.map((c) => {
              const active = c === "R";
              const side = c === "B" ? "border-r-[#8e8e8e]" : c === "" ? "border-r-transparent" : "border-r-[#d4d4d4]";
              return (
                <th
                  key={c}
                  scope="col"
                  className={`border-r pb-0.5 ${side} ${c === "L" ? "pr-9" : ""} ${
                    active ? "border-b-2 border-b-[#1e7145] bg-[#ececec] font-bold text-[#1e7145]" : "border-b border-b-[#b4b4b4] font-normal"
                  }`}
                >
                  {c}
                </th>
              );
            })}
          </tr>
        </thead>
        <tbody>
          {numbers.map((n) => (
            <tr key={n} className={rowHeight(n)}>
              <th
                scope="row"
                className={`overflow-hidden bg-linear-to-r from-[#fdfdfd] to-[#f3f3f3] p-0 text-center ${
                  n === 1 ? "pt-1" : ""
                } ${n === 40 ? "" : "border-b border-b-[#e0e0e0]"} ${HEAVY_RULES[n] ? "align-top" : "align-middle"} ${
                  n === 15 ? "border-r-2 border-r-[#1e7145] font-bold text-[#1e7145]" : "border-r border-r-[#b4b4b4] font-normal text-[#555]"
                }`}
              >
                {n === 40 ? <span className="block h-[9px] overflow-hidden leading-3">40</span> : n}
              </th>
              {COLUMNS.map((c, i) => (
                <Cell key={c} n={n} col={c} index={i} />
              ))}
            </tr>
          ))}
        </tbody>
      </table>
      <div className="pointer-events-none absolute top-[110px] left-[815px] z-20 h-[336px] w-[372px] border-[5px] border-[#ff7200] shadow-[-1px_0_0_#7dfb5a,inset_-1px_0_0_#7dfb5a,inset_0_1px_0_#d9b64a,0_1px_0_#d9b64a]" />
    </div>
  );
}

/* ---------- sheet tabs ---------- */

function SheetTabs() {
  return (
    <footer>
      <div className="flex h-[26px] border-t border-[#c4c4c4] bg-[#ececec] font-['Liberation_Sans',Arial,sans-serif] text-[12px] text-[#666]">
        <div className="flex w-[60px] items-center gap-4 pl-[14px]">
          <button type="button" aria-label="Previous sheet">
            <Svg w={8} h={11}>
              <path d="M8 0v11L0 5.500z" fill="#b0b0b0" stroke="none" />
            </Svg>
          </button>
          <button type="button" aria-label="Next sheet">
            <Svg w={8} h={11}>
              <path d="M0 0v11l8-5.500z" fill="#b0b0b0" stroke="none" />
            </Svg>
          </button>
        </div>
        <button type="button" aria-current="page" className="-mt-px h-[23px] w-[118px] rounded-b-[3px] border border-t-0 border-[#bdbdbd] bg-white pt-0.5 font-bold text-[#1e8449]">
          Budgetförslag
        </button>
        <button type="button" className="w-[201px] border-r border-[#c9c9c9] font-['Inter',sans-serif] font-medium text-[#6e6e6e]">
          Resultaträkning - Månadsvis
        </button>
        <button type="button" aria-label="Add sheet" className="flex w-[38px] items-center justify-center border-r border-[#c9c9c9]">
          <Svg w={11} h={11}>
            <path d="M5.500 0v11M0 5.500h11" stroke="#555" strokeWidth="1.600" />
          </Svg>
        </button>
      </div>
      <div className="flex h-1 border-t border-[#a3a3a3] bg-[#e2e2e2]">
        <div className="mr-[278px] ml-auto w-[37px] bg-[#a0a0a0]" />
      </div>
    </footer>
  );
}

export default function App() {
  return (
    <div className="min-h-screen bg-white pt-1 pr-[9px] font-['Inter',sans-serif]">
      <main className="overflow-hidden">
        <div className="bg-[#2c6fae]">
          <header className="rounded-tl-[6px] bg-[#f4f4f4]">
            <TitleBar />
            <RibbonTabs />
            <Ribbon />
          </header>
        </div>
        <FormulaBar />
        <div className="h-0.5 border-t border-[#b4b4b4] bg-[#f4f4f4]" />
        <Sheet />
        <SheetTabs />
      </main>
    </div>
  );
}
